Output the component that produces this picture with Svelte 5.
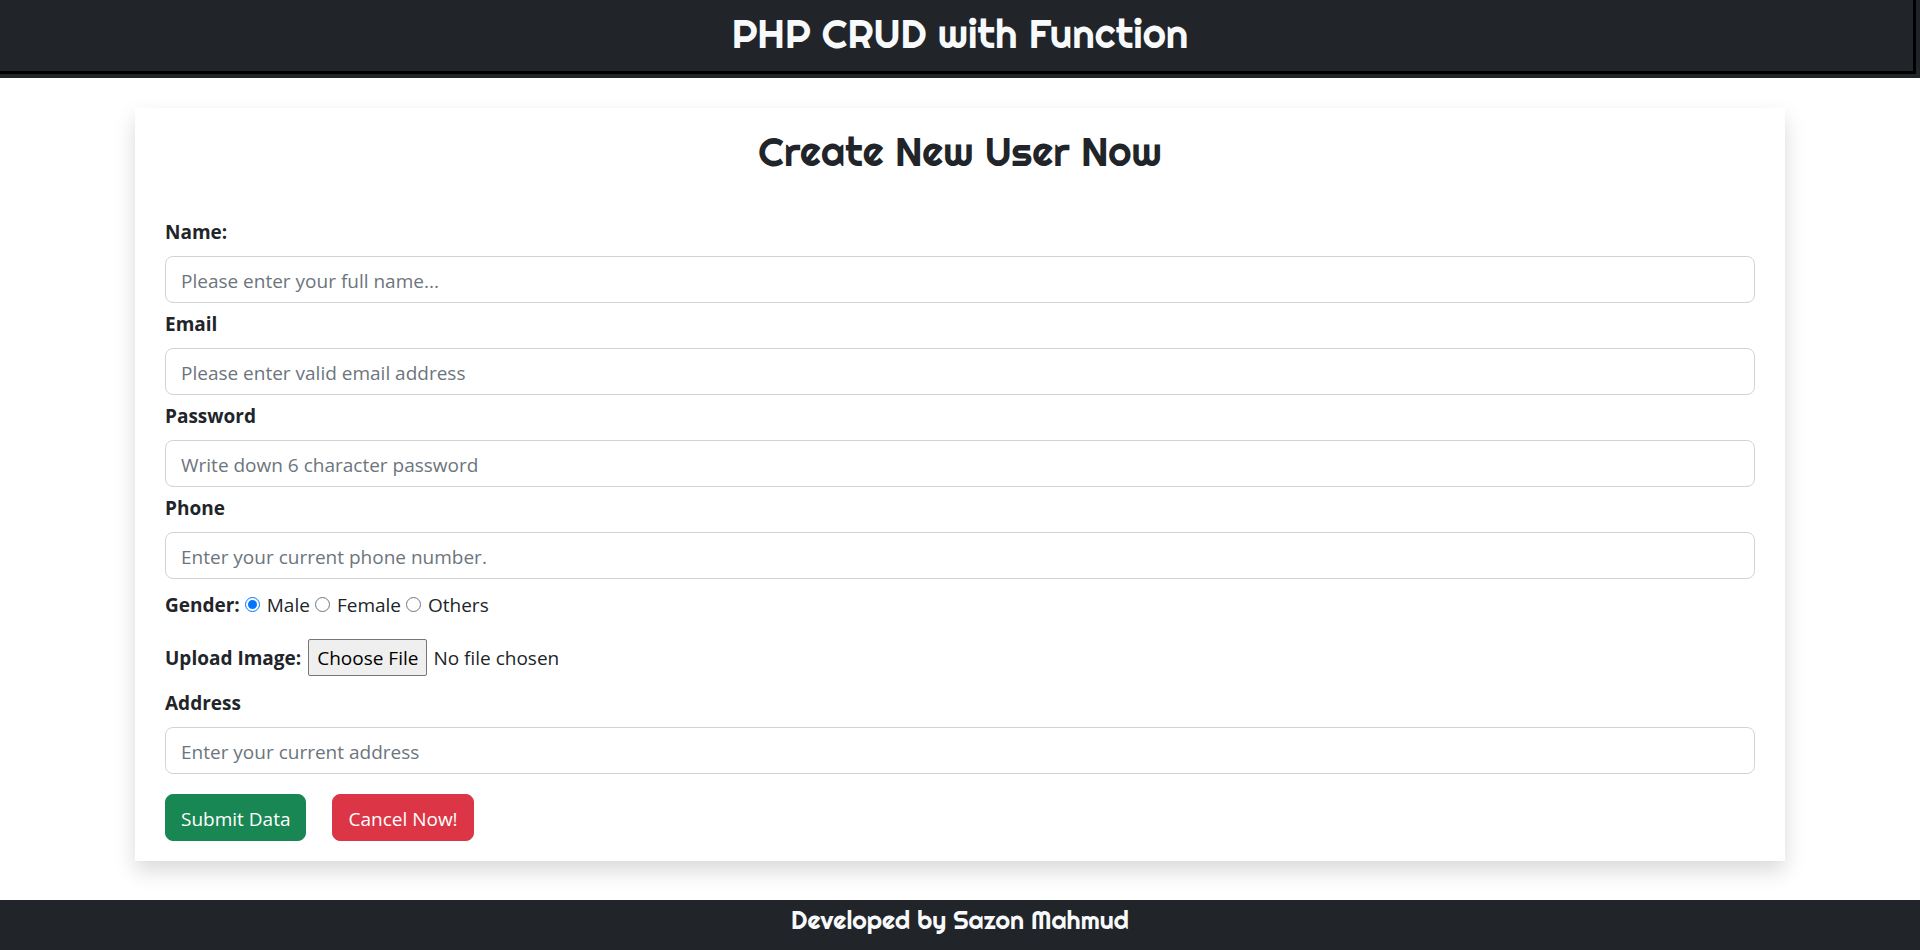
<script>
  const fields = [
    { id: 'name', label: 'Name:', type: 'text', hint: 'Please enter your full name...' },
    { id: 'email', label: 'Email', type: 'email', hint: 'Please enter valid email address' },
    { id: 'password', label: 'Password', type: 'password', hint: 'Write down 6 character password' },
    { id: 'phone', label: 'Phone', type: 'tel', hint: 'Enter your current phone number.' }
  ];
  const genders = ['Male', 'Female', 'Others'];
  let gender = $state('Male');
</script>

<div class="page">
  <header><h1>PHP CRUD with Function</h1></header>

  <main>
    <form class="card" onsubmit={(e) => e.preventDefault()}>
      <h2>Create New User Now</h2>

      {#each fields as field}
        <div class="field">
          <label for={field.id}>{field.label}</label>
          <input class="control" id={field.id} type={field.type} placeholder={field.hint} />
        </div>
      {/each}

      <div class="genders" role="radiogroup" aria-labelledby="gender-label">
        <span class="title" id="gender-label">Gender:</span>
        {#each genders as option}
          <label class="option">
            <input type="radio" name="gender" value={option} bind:group={gender} />
            {option}
          </label>
        {/each}
      </div>

      <div class="upload">
        <label for="image">Upload Image:</label>
        <input id="image" type="file" />
      </div>

      <div class="field">
        <label for="address">Address</label>
        <input class="control" id="address" type="text" placeholder="Enter your current address" />
      </div>

      <div class="actions">
        <button class="submit" type="submit">Submit Data</button>
        <button class="cancel" type="button">Cancel Now!</button>
      </div>
    </form>
  </main>

  <footer><p>Developed by Sazon Mahmud</p></footer>
</div>

<style>
  :global(body) {
    margin: 0;
    background: #fff;
  }

  .page {
    display: flex;
    flex-direction: column;
    min-height: 100vh;
    color: #212529;
    font: 19px/30px 'Segoe UI', 'Open Sans', sans-serif;
  }

  .page :global(*) {
    box-sizing: border-box;
  }

  h1,
  h2,
  footer p {
    margin: 0;
    font-family: Righteous, Lato, sans-serif;
    font-weight: 500;
    text-align: center;
  }

  header {
    padding: 10px 20px 20px;
    background: #212529;
    box-shadow:
      inset -4px -4px #212529,
      inset -7px -7px #000;
    color: #f8f9fa;
  }

  h1,
  h2 {
    font-size: 40px;
    line-height: 48px;
  }

  main {
    flex: 1;
    padding: 30px 15px;
  }

  .card {
    max-width: 1650px;
    margin: 0 auto;
    padding: 20px 30px;
    background: #fff;
    box-shadow: 0 10px 20px rgba(0, 0, 0, 0.15);
  }

  h2 {
    margin-bottom: 41px;
  }

  .field {
    display: flex;
    flex-direction: column;
    gap: 9px;
    margin-bottom: 6px;
  }

  .field label,
  .upload label,
  .title {
    font-weight: 700;
  }

  .field label {
    align-self: flex-start;
  }

  .control {
    width: 100%;
    padding: 9px 15px 6px;
    border: 1px solid #ced4da;
    border-radius: 8px;
    background: #fff;
    color: inherit;
    font: inherit;
  }

  .control::placeholder {
    color: #6c757d;
    opacity: 1;
  }

  .genders,
  .option,
  .upload {
    display: flex;
    align-items: center;
  }

  .genders {
    gap: 5px;
    margin: 11px 0 19px;
  }

  .option {
    gap: 7px;
  }

  .option input {
    width: 15px;
    height: 15px;
    margin: 0 0 2px;
  }

  .upload {
    gap: 7px;
    margin-bottom: 12px;
  }

  .upload input {
    min-width: 0;
    font: inherit;
  }

  .upload input::file-selector-button {
    margin-right: 6px;
    padding: 3px 8px 2px;
    border: 1px solid #767676;
    border-radius: 2px;
    background: #efefef;
    color: #000;
    font: inherit;
  }

  .actions {
    display: flex;
    gap: 26px;
    margin-top: 20px;
  }

  button {
    padding: 9px 15px 6px;
    border: 1px solid transparent;
    border-radius: 8px;
    color: #fff;
    font: inherit;
    cursor: pointer;
  }

  .submit {
    border-color: #198754;
    background: #198754;
  }

  .cancel {
    border-color: #dc3545;
    background: #dc3545;
  }

  footer {
    padding: 5px 20px 15px;
    background: #212529;
    color: #f8f9fa;
  }

  footer p {
    font-size: 25px;
    line-height: 30px;
  }
</style>
